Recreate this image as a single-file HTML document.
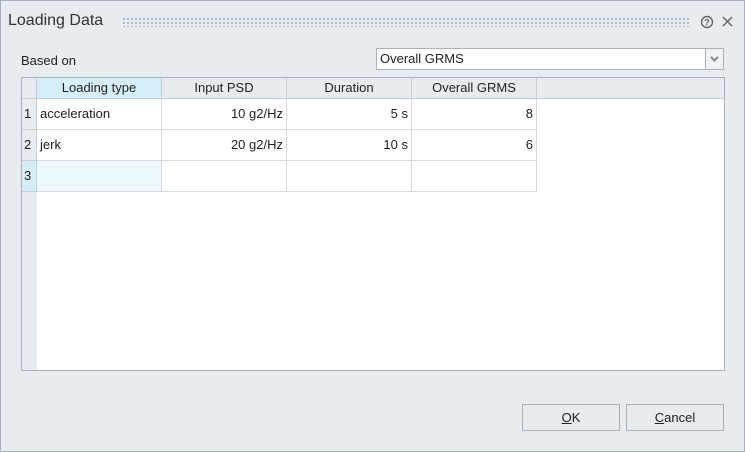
<!DOCTYPE html>
<html><head><style>
*{box-sizing:border-box;margin:0;padding:0}
body{width:745px;height:452px;background:#e6ecf0;font-family:"Liberation Sans",sans-serif;font-size:13px;color:#222;position:relative;overflow:hidden}
.frame{position:absolute;left:0;top:0;width:745px;height:452px;border:1px solid #a9b2ba}
.a{position:absolute}
.grip{position:absolute;left:122px;top:17px;width:568px;height:10px;background-image:radial-gradient(circle,#a8b0b8 0.9px,transparent 1.2px);background-size:4px 4px}
.grid{left:21px;top:77px;width:704px;height:294px;background:#fff;border:1px solid #a9b2ba}
.c{position:absolute;border-right:1px solid #d6dade;border-bottom:1px solid #d6dade;line-height:30px;padding:0 3px;height:31px;white-space:nowrap}
.h{position:absolute;top:0;height:21px;line-height:20px;text-align:center;background:#e6ecf0;border-right:1px solid #c8ced4;border-bottom:1px solid #c8ced4}
.r{text-align:right}
.btn{position:absolute;top:404px;width:98px;height:27px;border:1px solid #aab2ba;background:#e6ecf0;text-align:center;line-height:25px}
</style></head><body>
<div class="frame"></div>
<div class="a" style="left:8px;top:12px;font-size:16px;color:#333">Loading Data</div>
<div class="grip"></div>
<svg class="a" style="left:700px;top:15px" width="14" height="14"><circle cx="7" cy="7" r="5.5" fill="none" stroke="#666" stroke-width="1.4"/><text x="7" y="10.5" font-size="9" text-anchor="middle" fill="#666" font-family="Liberation Sans" font-weight="bold">?</text></svg>
<svg class="a" style="left:721px;top:15px" width="13" height="13"><path d="M2 2L11 11M11 2L2 11" stroke="#666" stroke-width="1.5"/></svg>
<div class="a" style="left:21px;top:53px">Based on</div>
<div class="a" style="left:376px;top:48px;width:330px;height:22px;background:#fff;border:1px solid #a9b2ba;line-height:20px;padding-left:3px">Overall GRMS</div>
<div class="a" style="left:705px;top:48px;width:19px;height:22px;background:#f0f3f5;border:1px solid #a9b2ba"><svg width="17" height="20"><path d="M5 8L8.5 11.5L12 8" stroke="#888" stroke-width="2" fill="none"/></svg></div>
<div class="a grid">
<div class="a" style="left:0;top:0;width:15px;height:292px;background:#e6ecf0"></div>
<div class="h" style="left:0;width:702px;border-right:none"></div>
<div class="h" style="left:0;width:15px"></div>
<div class="h" style="left:15px;width:125px;background:#d6eef9">Loading type</div>
<div class="h" style="left:140px;width:125px">Input PSD</div>
<div class="h" style="left:265px;width:125px">Duration</div>
<div class="h" style="left:390px;width:125px">Overall GRMS</div>
<div class="c" style="left:0;top:21px;width:15px;padding:0 2px;border-color:#c8ced4">1</div>
<div class="c" style="left:0;top:52px;width:15px;padding:0 2px;border-color:#c8ced4">2</div>
<div class="c" style="left:0;top:83px;width:15px;padding:0 2px;border-color:#c8ced4;background:#d6eef9">3</div>
<div class="c" style="left:15px;top:21px;width:125px">acceleration</div>
<div class="c r" style="left:140px;top:21px;width:125px">10 g2/Hz</div>
<div class="c r" style="left:265px;top:21px;width:125px">5 s</div>
<div class="c r" style="left:390px;top:21px;width:125px">8</div>
<div class="c" style="left:15px;top:52px;width:125px">jerk</div>
<div class="c r" style="left:140px;top:52px;width:125px">20 g2/Hz</div>
<div class="c r" style="left:265px;top:52px;width:125px">10 s</div>
<div class="c r" style="left:390px;top:52px;width:125px">6</div>
<div class="c" style="left:15px;top:83px;width:125px;background:#eef9fd"></div>
<div class="c" style="left:140px;top:83px;width:125px"></div>
<div class="c" style="left:265px;top:83px;width:125px"></div>
<div class="c" style="left:390px;top:83px;width:125px"></div>
</div>
<div class="btn" style="left:522px"><u>O</u>K</div>
<div class="btn" style="left:626px"><u>C</u>ancel</div>
</body></html>
